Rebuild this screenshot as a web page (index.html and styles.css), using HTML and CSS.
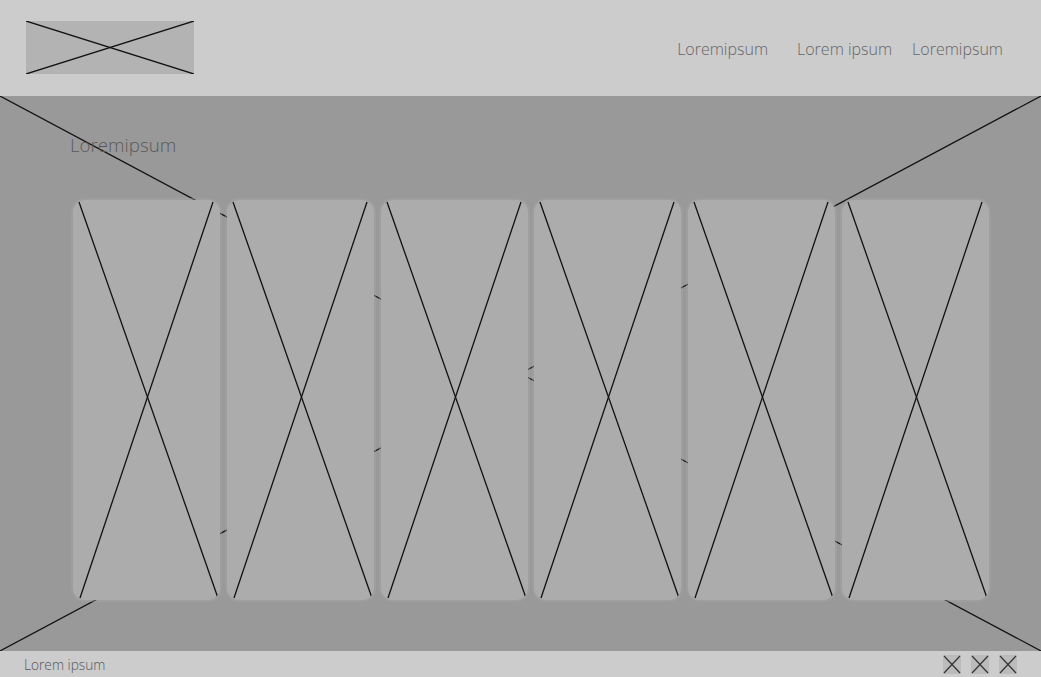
FILE: index.html
```html
<!DOCTYPE html>
<html>
<head>
<meta charset="utf-8">
<link rel="stylesheet" href="styles.css">
</head>
<body>
<div class="page">
  <header class="header">
    <div class="logo">
      <svg class="xsvg" viewBox="0 0 168 53" preserveAspectRatio="none"><line x1="0" y1="0" x2="168" y2="53"/><line x1="168" y1="0" x2="0" y2="53"/></svg>
    </div>
    <nav class="nav">
      <a class="nav-item">Loremipsum</a>
      <a class="nav-item">Lorem ipsum</a>
      <a class="nav-item">Loremipsum</a>
    </nav>
  </header>
  <main class="main">
    <svg class="bg-x" viewBox="0 0 1041 555" preserveAspectRatio="none"><line x1="0" y1="0" x2="1041" y2="555"/><line x1="1041" y1="0" x2="0" y2="555"/></svg>
    <h1 class="title">Loremipsum</h1>
    <div class="cards">
      <div class="card"><svg class="xsvg" viewBox="0 0 147 400" preserveAspectRatio="none"><line x1="6" y1="2" x2="145" y2="398"/><line x1="140" y1="2" x2="7" y2="398"/></svg></div>
      <div class="card"><svg class="xsvg" viewBox="0 0 147 400" preserveAspectRatio="none"><line x1="6" y1="2" x2="145" y2="398"/><line x1="140" y1="2" x2="7" y2="398"/></svg></div>
      <div class="card"><svg class="xsvg" viewBox="0 0 147 400" preserveAspectRatio="none"><line x1="6" y1="2" x2="145" y2="398"/><line x1="140" y1="2" x2="7" y2="398"/></svg></div>
      <div class="card"><svg class="xsvg" viewBox="0 0 147 400" preserveAspectRatio="none"><line x1="6" y1="2" x2="145" y2="398"/><line x1="140" y1="2" x2="7" y2="398"/></svg></div>
      <div class="card"><svg class="xsvg" viewBox="0 0 147 400" preserveAspectRatio="none"><line x1="6" y1="2" x2="145" y2="398"/><line x1="140" y1="2" x2="7" y2="398"/></svg></div>
      <div class="card"><svg class="xsvg" viewBox="0 0 147 400" preserveAspectRatio="none"><line x1="6" y1="2" x2="145" y2="398"/><line x1="140" y1="2" x2="7" y2="398"/></svg></div>
    </div>
  </main>
  <footer class="footer">
    <span class="footer-text">Lorem ipsum</span>
    <div class="icons">
      <span class="icon"><svg class="xsvg" viewBox="0 0 18 19" preserveAspectRatio="none"><line x1="1" y1="1" x2="17" y2="18"/><line x1="17" y1="1" x2="1" y2="18"/></svg></span>
      <span class="icon"><svg class="xsvg" viewBox="0 0 18 19" preserveAspectRatio="none"><line x1="1" y1="1" x2="17" y2="18"/><line x1="17" y1="1" x2="1" y2="18"/></svg></span>
      <span class="icon"><svg class="xsvg" viewBox="0 0 18 19" preserveAspectRatio="none"><line x1="1" y1="1" x2="17" y2="18"/><line x1="17" y1="1" x2="1" y2="18"/></svg></span>
    </div>
  </footer>
</div>
</body>
</html>
```

FILE: styles.css
```css
* { box-sizing: border-box; }
html, body { margin: 0; padding: 0; }
body {
  font-family: "Open Sans", "Liberation Sans", sans-serif;
  background: #999999;
  overflow: hidden;
}
.page {
  width: 1041px;
  height: 677px;
  display: flex;
  flex-direction: column;
}
.header {
  height: 96px;
  background: #cccccc;
  display: flex;
  align-items: center;
  justify-content: space-between;
  padding: 0 38px 0 26px;
}
.logo {
  width: 168px;
  height: 53px;
  margin-top: -1px;
  background: #b4b3b3;
}
.xsvg {
  display: block;
  width: 100%;
  height: 100%;
}
.xsvg line {
  stroke: #111;
  stroke-width: 1.3;
  vector-effect: non-scaling-stroke;
}
.nav {
  display: flex;
  gap: 20px;
  margin-top: 2px;
}
.nav-item {
  font-size: 16px;
  font-weight: 300;
  color: #666666;
}
.nav-item:first-child { margin-right: 9px; }
.main {
  height: 555px;
  background: #999999;
  position: relative;
  padding: 0 52px 0 73px;
}
.bg-x {
  position: absolute;
  left: 0;
  top: 0;
  width: 100%;
  height: 100%;
}
.bg-x line {
  stroke: #111;
  stroke-width: 1.2;
}
.title {
  position: relative;
  margin: 0 0 0 -3px;
  padding-top: 36px;
  height: 104px;
  font-size: 18.7px;
  font-weight: 300;
  color: #5a5a5a;
  line-height: 26px;
}
.cards {
  position: relative;
  display: flex;
  gap: 6.8px;
  height: 400px;
}
.card {
  width: 147px;
  height: 400px;
  background: #adacac;
  border-radius: 12px;
  overflow: hidden;
  box-shadow: 0 0 0 2px rgba(165, 165, 165, 0.4);
}
.footer {
  height: 26px;
  background: #cccccc;
  display: flex;
  align-items: center;
  justify-content: space-between;
  padding: 0 24px;
}
.footer-text {
  font-size: 13.7px;
  font-weight: 300;
  color: #555555;
  margin-top: 1px;
}
.icons {
  display: flex;
  gap: 10px;
}
.icon {
  width: 18px;
  height: 19px;
  background: #bbbbbb;
  display: block;
}
.icon .xsvg line { stroke: #333; stroke-width: 1.2; }
```
